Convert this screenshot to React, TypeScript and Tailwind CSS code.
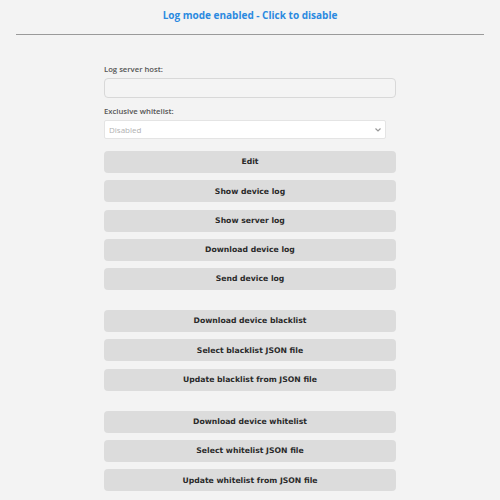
const logButtons = ["Edit", "Show device log", "Show server log", "Download device log", "Send device log"];
const blacklistButtons = ["Download device blacklist", "Select blacklist JSON file", "Update blacklist from JSON file"];
const whitelistButtons = ["Download device whitelist", "Select whitelist JSON file", "Update whitelist from JSON file"];

const ActionButton = ({ label }: { label: string }) => (
    <button className="block w-full h-[22px] rounded-[4px] bg-[#dcdcdc] text-[7.7px] font-bold text-[#2a2a2a] [font-family:'DejaVu_Sans',sans-serif]">
        {label}
    </button>
);

const ButtonGroup = ({ labels, className }: { labels: string[]; className: string }) => (
    <div className={`flex flex-col gap-[7.3px] ${className}`}>
        {labels.map((b) => <ActionButton key={b} label={b} />)}
    </div>
);

export default function App() {
    return (
        <div className="w-[500px] h-[500px] bg-[#f3f3f3] overflow-hidden [font-family:'Open_Sans',sans-serif]">
            <div className="pt-[8px] text-center text-[10px] leading-[15px] font-bold text-[#2b8ae0]">
                Log mode enabled - Click to disable
            </div>
            <div className="mx-[16px] mt-[11px] h-px bg-[#9a9a9a]" />
            <div className="w-[292px] mx-auto mt-[28px] flex flex-col">
                <label className="text-[7.7px] leading-[12px] font-semibold text-[#555]">Log server host:</label>
                <input className="block mt-[3px] h-[20px] w-full rounded-[4px] border border-[#d8d8d8] bg-[#f4f4f4]" />
                <label className="mt-[7px] text-[7.7px] leading-[12px] font-semibold text-[#555]">Exclusive whitelist:</label>
                <div className="relative mt-[3px] w-[282px] h-[19px]">
                    <select className="block h-[19px] w-full appearance-none rounded-[2px] border border-[#e4e4e4] bg-white px-[4px] text-[8px] text-[#b0b0b0]">
                        <option>Disabled</option>
                    </select>
                    <svg className="absolute right-[5px] top-[8px] w-[6px] h-[4px]" viewBox="0 0 6 4">
                        <path d="M0.5 0.5 L3 3 L5.5 0.5" fill="none" stroke="#999" strokeWidth="1.2" />
                    </svg>
                </div>
                <ButtonGroup labels={logButtons} className="mt-[12px]" />
                <ButtonGroup labels={blacklistButtons} className="mt-[20px]" />
                <ButtonGroup labels={whitelistButtons} className="mt-[20px]" />
            </div>
        </div>
    );
}
